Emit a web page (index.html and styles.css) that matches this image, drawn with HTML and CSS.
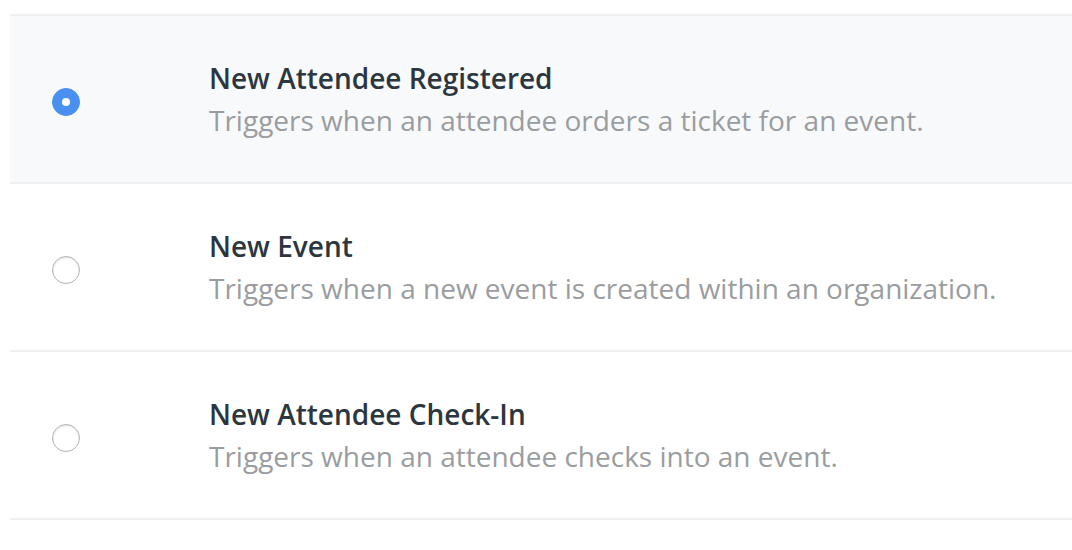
FILE: index.html
```html
<!DOCTYPE html>
<html>
<head>
<meta charset="utf-8">
<link rel="stylesheet" href="styles.css">
</head>
<body>
<ul class="list">
  <li class="item selected">
    <span class="radio"></span>
    <div class="text">
      <div class="title">New Attendee Registered</div>
      <div class="desc">Triggers when an attendee orders a ticket for an event.</div>
    </div>
  </li>
  <li class="item">
    <span class="radio"></span>
    <div class="text">
      <div class="title">New Event</div>
      <div class="desc">Triggers when a new event is created within an organization.</div>
    </div>
  </li>
  <li class="item">
    <span class="radio"></span>
    <div class="text">
      <div class="title">New Attendee Check-In</div>
      <div class="desc">Triggers when an attendee checks into an event.</div>
    </div>
  </li>
</ul>
</body>
</html>
```
FILE: styles.css
```css
html, body { margin: 0; padding: 0; background: #fff; }
body { font-family: "Open Sans", sans-serif; }
.list {
  list-style: none;
  margin: 14px 0 0 10px;
  padding: 0;
  border-top: 2px solid #efefef;
}
.item {
  height: 166px;
  border-bottom: 2px solid #efefef;
  display: flex;
  align-items: center;
  box-sizing: content-box;
}
.item.selected { background: #f8f9fb; }
.radio {
  width: 26px;
  height: 26px;
  border-radius: 50%;
  border: 1px solid #b4b4b4;
  background: #fff;
  box-shadow: inset 0 1px 2px rgba(0,0,0,0.12);
  margin: 6px 0 0 42px;
  flex: none;
  box-sizing: content-box;
}
.selected .radio {
  border-color: #4a90f0;
  background: #4a90f0;
  box-shadow: none;
  position: relative;
}
.selected .radio::after {
  content: "";
  position: absolute;
  left: 9px; top: 9px;
  width: 8px; height: 8px;
  border-radius: 50%;
  background: #fff;
}
.text { margin: 0 0 1px 129px; }
.title {
  font-size: 28px;
  font-weight: 600;
  color: #2b363e;
  line-height: 42px;
}
.desc {
  font-size: 28px;
  color: #9a9d9f;
  line-height: 42px;
}
```
